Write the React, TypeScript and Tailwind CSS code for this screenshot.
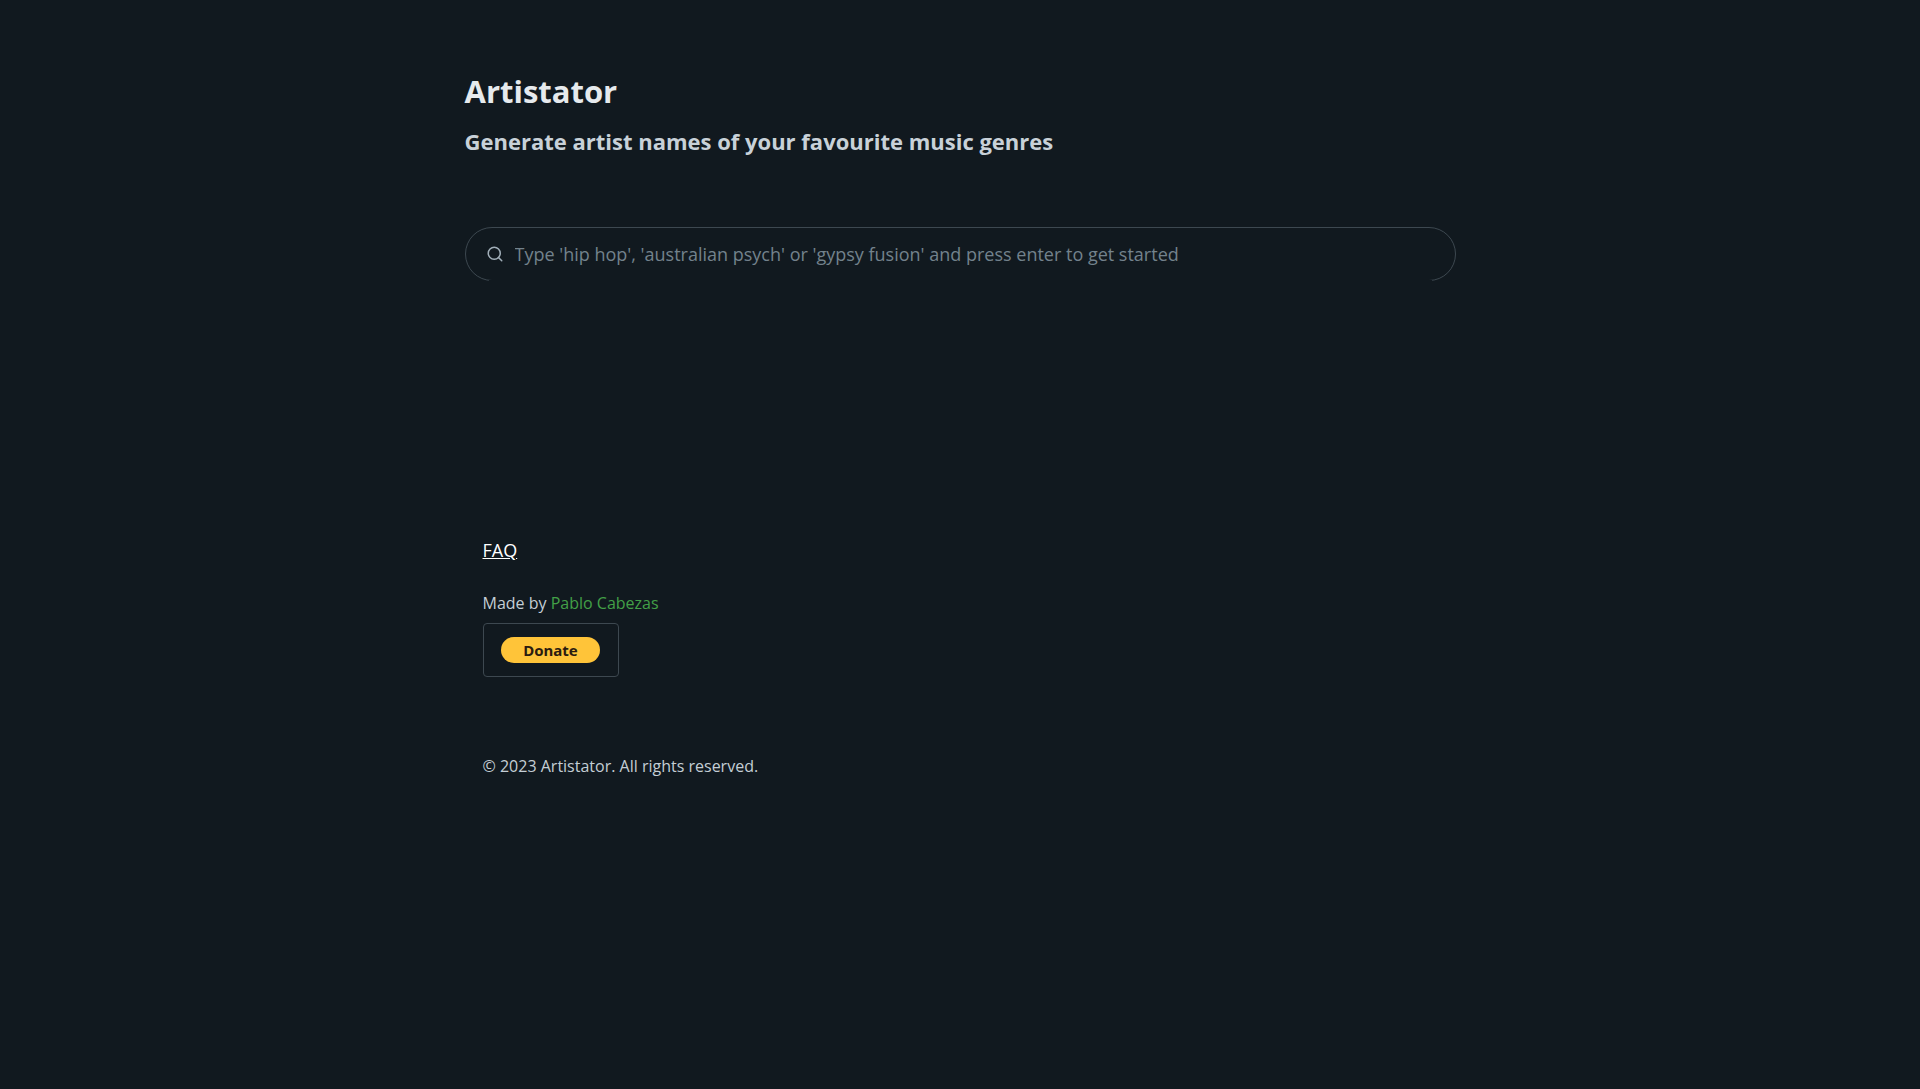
export default function App() {
  return (
    <div className="min-h-screen bg-[#11191f] font-['Open_Sans','Noto_Sans',sans-serif] text-[#c4ced5]">
      <div className="mx-auto w-full max-w-[991px] pt-[71px]">
        <header>
          <h1 className="text-[31px] leading-10 font-bold text-[#e6eaed]">Artistator</h1>
          <h2 className="mt-2 text-[22px] leading-11 font-bold text-[#c8d1d8]">
            Generate artist names of your favourite music genres
          </h2>
        </header>
        <main className="mt-16">
          <div className="relative">
            <svg
              className="absolute top-[18px] left-[21px] h-[18px] w-[18px]"
              viewBox="0 0 24 24"
              fill="none"
              stroke="#a2afb9"
              strokeWidth="2"
              strokeLinecap="round"
              strokeLinejoin="round"
              aria-hidden="true"
            >
              <circle cx="11" cy="11" r="8" />
              <path d="m21 21-4.35-4.35" />
            </svg>
            <input
              type="search"
              aria-label="Music genre"
              placeholder="Type 'hip hop', 'australian psych' or 'gypsy fusion' and press enter to get started"
              className="block h-[54px] w-full rounded-full border border-[#3d4850] bg-transparent pr-5 pl-[49px] text-[18px] text-[#c4ced5] outline-none placeholder:text-[#73828c]"
            />
            <span className="absolute inset-x-6 bottom-0 h-px bg-[#11191f]" />
          </div>
        </main>
        <footer className="mt-[255px] px-[18px] text-base leading-7">
          <p>
            <a href="#faq" className="text-[18px] text-white underline">FAQ</a>
          </p>
          <p className="mt-6">
            Made by <a href="#author" className="text-[#43a047]">Pablo Cabezas</a>
          </p>
          <form className="mt-[6px] flex h-[54px] w-[136px] items-center justify-center rounded-sm border border-[#3d4850]">
            <button
              type="button"
              className="h-[26px] w-[99px] rounded-full bg-[#ffc439] font-['Noto_Sans',sans-serif] text-[15px] leading-6 font-bold text-[#2c1c10]"
            >
              Donate
            </button>
          </form>
          <p className="mt-[75px]">© 2023 Artistator. All rights reserved.</p>
        </footer>
      </div>
    </div>
  );
}
